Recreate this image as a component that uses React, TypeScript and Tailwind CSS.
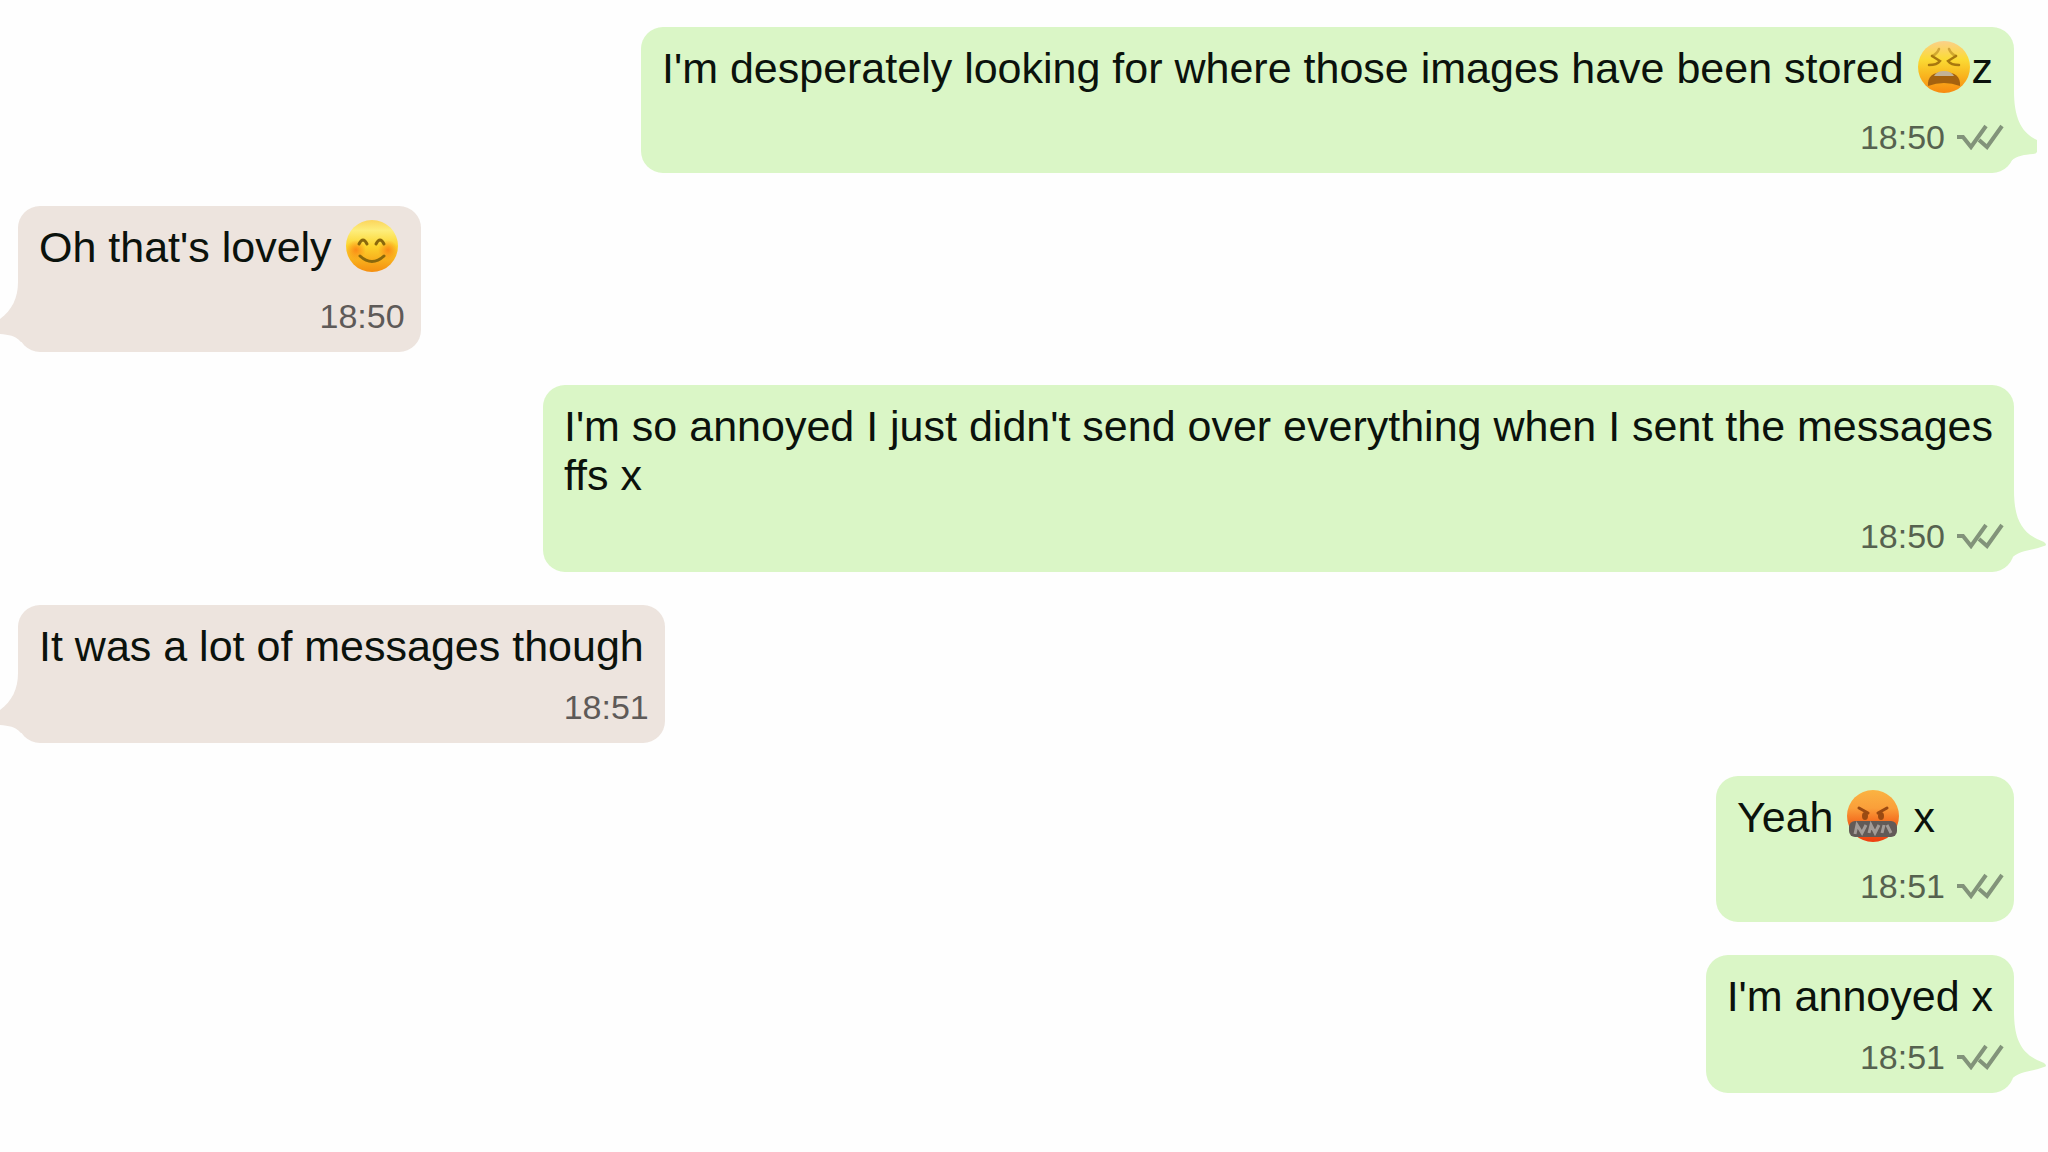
import type { ReactNode } from 'react';

type Tail = 'full' | 'cut' | 'none';

interface Message {
  id: number;
  sent: boolean;
  time: string;
  tail: Tail;
  body: ReactNode;
}

const emojiClass = 'mx-px -mt-1 mb-[7px] inline size-[54px] align-[-18px]';

function WearyEmoji() {
  return (
    <svg viewBox="0 0 54 54" className={emojiClass} role="img" aria-label="weary face">
      <defs>
        <linearGradient id="weary-fill" x1="0" y1="0" x2="0" y2="1">
          <stop offset="0" stopColor="#fbd08a" />
          <stop offset="0.35" stopColor="#fbdb35" />
          <stop offset="0.6" stopColor="#f9bd22" />
          <stop offset="1" stopColor="#f8890f" />
        </linearGradient>
      </defs>
      <circle cx="27" cy="27" r="26" fill="url(#weary-fill)" />
      <g fill="none" stroke="#a8780f" strokeWidth="2.5" strokeLinecap="round">
        <path d="M22 9 Q20 14 15 16" strokeOpacity="0.5" />
        <path d="M32 9 Q34 14 39 16" strokeOpacity="0.5" />
        <path d="M15 16 L23 21 Q20 25 12 25" />
        <path d="M39 16 L31 21 Q34 25 42 25" />
      </g>
      <path d="M11 46 Q10 32 27 32 Q44 32 43 46 Q27 40 11 46 Z" fill="#a5620f" />
      <path d="M17 36 Q20 31 27 31 Q34 31 37 36 Z" fill="#c3b296" />
    </svg>
  );
}

function SmilingEmoji() {
  return (
    <svg viewBox="0 0 54 54" className={emojiClass} role="img" aria-label="smiling face">
      <defs>
        <linearGradient id="smile-fill" x1="0" y1="0" x2="0" y2="1">
          <stop offset="0" stopColor="#fbd45c" />
          <stop offset="0.2" stopColor="#fdee7c" />
          <stop offset="0.5" stopColor="#fcd42c" />
          <stop offset="1" stopColor="#f58f10" />
        </linearGradient>
        <radialGradient id="smile-cheek">
          <stop offset="0" stopColor="#fb8414" stopOpacity="0.9" />
          <stop offset="1" stopColor="#fb8414" stopOpacity="0" />
        </radialGradient>
      </defs>
      <circle cx="27" cy="27" r="26" fill="url(#smile-fill)" />
      <circle cx="11" cy="31" r="10" fill="url(#smile-cheek)" />
      <circle cx="43" cy="31" r="10" fill="url(#smile-cheek)" />
      <g fill="none" stroke="#8a680c" strokeWidth="3" strokeLinecap="round">
        <path d="M14 25 Q18 17 22 25" />
        <path d="M31 25 Q35 17 39 25" />
        <path d="M15 37 Q27 48 39 37" />
      </g>
    </svg>
  );
}

function CursingEmoji() {
  return (
    <svg viewBox="0 0 54 54" className={emojiClass} role="img" aria-label="cursing face">
      <defs>
        <linearGradient id="curse-fill" x1="0" y1="0" x2="0" y2="1">
          <stop offset="0" stopColor="#fbb342" />
          <stop offset="0.35" stopColor="#fa9f3a" />
          <stop offset="0.65" stopColor="#f3661b" />
          <stop offset="1" stopColor="#ee3f10" />
        </linearGradient>
      </defs>
      <circle cx="27" cy="27" r="26" fill="url(#curse-fill)" />
      <g stroke="#9a4a12" strokeWidth="3" strokeLinecap="round">
        <path d="M13 19 L22 24" />
        <path d="M41 19 L32 24" />
      </g>
      <ellipse cx="19" cy="27" rx="3" ry="4" fill="#9a4a12" />
      <ellipse cx="35" cy="27" rx="3" ry="4" fill="#9a4a12" />
      <rect x="3" y="32" width="48" height="16" rx="6" fill="#625a57" />
      <path
        d="M9 45 L11 36 L16 44 L20 36 M23 44 L25 36 L29 44 L33 36 M36 44 L38 36 M41 36 L45 44"
        fill="none"
        stroke="#a29b97"
        strokeWidth="3"
      />
    </svg>
  );
}

function Ticks() {
  return (
    <svg viewBox="0 0 48 26" className="h-[26px] w-12" fill="none" stroke="#82937a" role="img" aria-label="delivered">
      <path d="M1 13 H7 L15 23 L30 2" strokeWidth="4" />
      <path d="M23 16 L31 23 L46 2" strokeWidth="4" />
    </svg>
  );
}

function BubbleTail({ sent, cut }: { sent: boolean; cut: boolean }) {
  if (!sent) {
    return (
      <svg viewBox="0 0 26 66" className="absolute right-full bottom-2 -mr-2 h-[66px] w-[26px]" fill="#ede4de">
        <path d="M18 4 C18 20 12 32 0 41 V56 C9 57 15 57 21 64 H26 V4 Z" />
      </svg>
    );
  }

  return (
    <svg viewBox="0 0 44 76" className="absolute bottom-2 left-full -ml-3 h-[76px] w-11" fill="#daf6c6">
      {cut ? (
        <path d="M12 2 C12 30 20 44 35 51 V63 Q34 65 31 65 C22 66 16 66 9 72 H2 V2 Z" />
      ) : (
        <path d="M12 2 C12 32 20 46 42 54 Q46 57 42 58 C30 63 16 62 9 71 H2 V2 Z" />
      )}
    </svg>
  );
}

function Bubble({ message }: { message: Message }) {
  const { sent, time, tail, body } = message;

  return (
    <li
      className={`relative flex flex-col gap-4 rounded-[22px] pt-[17px] pb-4 ${
        sent ? 'min-w-[298px] self-end bg-[#daf6c6]' : 'self-start bg-[#ede4de]'
      }`}
    >
      <p className="px-[21px] text-[43px] leading-[49px] text-[#0b120c]">{body}</p>
      <div
        className={`flex items-center justify-end gap-[11px] text-[34px] leading-10 ${
          sent ? 'pr-[10px] text-[#56624f]' : 'pr-4 text-[#5e5a58]'
        }`}
      >
        <time>{time}</time>
        {sent && <Ticks />}
      </div>
      {tail !== 'none' && <BubbleTail sent={sent} cut={tail === 'cut'} />}
    </li>
  );
}

const messages: Message[] = [
  {
    id: 1,
    sent: true,
    time: '18:50',
    tail: 'cut',
    body: (
      <>
        I'm desperately looking for where those images have been stored <WearyEmoji />z
      </>
    ),
  },
  {
    id: 2,
    sent: false,
    time: '18:50',
    tail: 'full',
    body: (
      <>
        Oh that's lovely <SmilingEmoji />
      </>
    ),
  },
  {
    id: 3,
    sent: true,
    time: '18:50',
    tail: 'full',
    body: (
      <>
        I'm so annoyed I just didn't send over everything when I sent the messages
        <br />
        ffs x
      </>
    ),
  },
  { id: 4, sent: false, time: '18:51', tail: 'full', body: 'It was a lot of messages though' },
  {
    id: 5,
    sent: true,
    time: '18:51',
    tail: 'none',
    body: (
      <>
        Yeah <CursingEmoji /> x
      </>
    ),
  },
  { id: 6, sent: true, time: '18:51', tail: 'full', body: "I'm annoyed x" },
];

export default function App() {
  return (
    <main className="min-h-screen overflow-hidden bg-[#fefefe] font-['Liberation_Sans',Arial,sans-serif]">
      <ul className="flex flex-col gap-[33px] pt-[27px] pr-[34px] pb-8 pl-[18px]">
        {messages.map(message => (
          <Bubble key={message.id} message={message} />
        ))}
      </ul>
    </main>
  );
}
